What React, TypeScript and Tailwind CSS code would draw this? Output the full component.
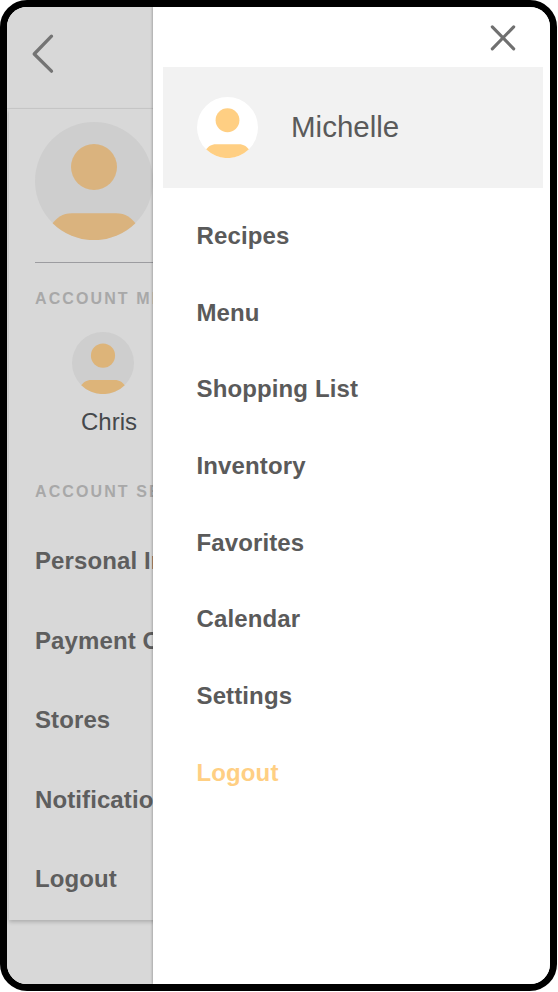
import { useState } from 'react';

const ACCOUNT_LINKS = ['Personal Info', 'Payment Options', 'Stores', 'Notifications', 'Logout'];

const MENU_ITEMS = [
  'Recipes',
  'Menu',
  'Shopping List',
  'Inventory',
  'Favorites',
  'Calendar',
  'Settings',
  'Logout',
];

interface AvatarProps {
  className: string;
  backdrop: string;
  figure: string;
}

function Avatar({ className, backdrop, figure }: AvatarProps) {
  return (
    <svg viewBox="0 0 118 118" className={className} aria-hidden="true">
      <circle cx="59" cy="59" r="59" className={backdrop} />
      <circle cx="59" cy="45" r="23" className={figure} />
      <path
        d="M17.6 101.2C22 96 27 91.3 37 91.3H81C91 91.3 96 96 100.4 101.2A59 59 0 0 1 17.6 101.2Z"
        className={figure}
      />
    </svg>
  );
}

function AccountPage() {
  return (
    <div className="flex w-[146px] shrink-0 flex-col overflow-hidden bg-[#d8d8d8]">
      {/* Header with back arrow */}
      <header className="h-[102px] w-[540px] shrink-0 border-b border-[#c9c9c9] pl-[24px] pt-[26px]">
        <button type="button" aria-label="Back" className="block cursor-pointer">
          <svg viewBox="0 0 24 42" className="h-[42px] w-[24px] fill-none stroke-[#747474]">
            <path d="M20.5 3.2L3.2 21L20.5 38.2" strokeWidth="3.3" strokeLinecap="round" strokeLinejoin="round" />
          </svg>
        </button>
      </header>

      {/* Account card */}
      <section className="ml-[2px] h-[811px] w-[540px] shrink-0 pl-[26px] shadow-[0_2px_4px_rgba(0,0,0,0.2)]">
        <div className="h-[154px] w-[480px] border-b border-[#9c9ca0] pt-[12.5px]">
          <Avatar className="h-[118px] w-[118px]" backdrop="fill-[#cecece]" figure="fill-[#dab37e]" />
        </div>

        <h2 className="pt-[24px] text-[16px] leading-[24px] font-bold tracking-[2.1px] whitespace-nowrap text-[#a8a8a8]">
          ACCOUNT MEMBERS
        </h2>
        <div className="flex h-[120px] w-[135px] flex-col items-center pt-[20.5px]">
          <Avatar className="h-[62px] w-[62px] shrink-0" backdrop="fill-[#cecece]" figure="fill-[#ddb479]" />
          <span className="ml-[13px] pt-[13px] text-[24px] leading-[30px] text-[#45484c]">Chris</span>
        </div>

        <h2 className="pt-[49px] text-[16px] leading-[24px] font-bold tracking-[2.1px] whitespace-nowrap text-[#a8a8a8]">
          ACCOUNT SETTINGS
        </h2>
        <ul className="pt-[17.5px]">
          {ACCOUNT_LINKS.map((link) => (
            <li
              key={link}
              className="flex h-[79.5px] items-center text-[24px] font-bold tracking-[0.1px] whitespace-nowrap text-[#5e5e5e]"
            >
              {link}
            </li>
          ))}
        </ul>
      </section>
    </div>
  );
}

function Drawer() {
  const [active, setActive] = useState('Logout');

  return (
    <aside className="z-10 flex flex-1 flex-col bg-white shadow-[-1px_0_2px_rgba(0,0,0,0.22)]">
      <div className="flex h-[60.4px] justify-end pt-[17px] pr-[33px]">
        <button type="button" aria-label="Close menu" className="block h-[28px] cursor-pointer">
          <svg viewBox="0 0 28 28" className="h-[28px] w-[28px] fill-none stroke-[#707070]">
            <path d="M3.3 2.8L24.7 24.8M24.7 2.8L3.3 24.8" strokeWidth="3.1" strokeLinecap="round" />
          </svg>
        </button>
      </div>

      <div className="mr-[7px] ml-[10px] flex h-[121px] items-center bg-[#f2f2f2] pl-[34px]">
        <Avatar className="h-[61px] w-[61px]" backdrop="fill-white" figure="fill-[#ffcf83]" />
        <span className="ml-[33px] pb-[2px] text-[29.5px] leading-[36px] text-[#5a5a5a]">Michelle</span>
      </div>

      <nav className="flex flex-col pt-[9.3px] pl-[43.5px]">
        {MENU_ITEMS.map((item) => (
          <a
            key={item}
            onClick={() => setActive(item)}
            className={`flex h-[76.7px] cursor-pointer items-center text-[24px] font-bold tracking-[0.12px] ${
              item === active ? 'text-[#ffcf83]' : 'text-[#5a5a5a]'
            }`}
          >
            {item}
          </a>
        ))}
      </nav>
    </aside>
  );
}

export default function App() {
  return (
    <div className="h-[992px] w-[558px] bg-white font-['Liberation_Sans',Arial,sans-serif]">
      <div className="flex h-[991px] w-[557px] overflow-hidden rounded-[27px] border-[7px] border-black bg-white">
        <AccountPage />
        <Drawer />
      </div>
    </div>
  );
}
